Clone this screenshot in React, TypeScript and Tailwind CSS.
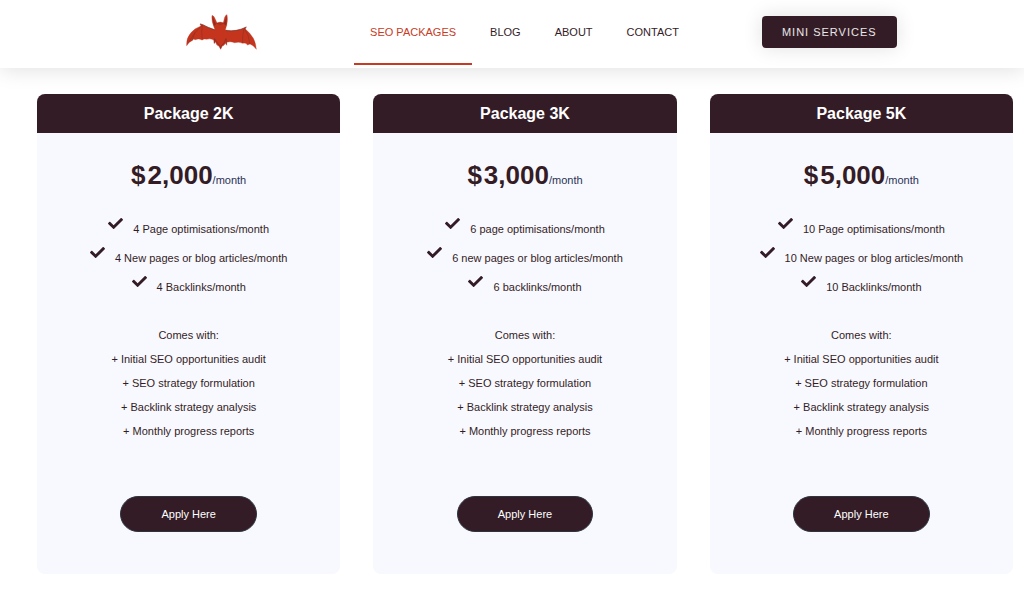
import { FaCheck } from 'react-icons/fa';

interface Package {
  name: string;
  price: string;
  features: string[];
}

const navItems = ['SEO PACKAGES', 'BLOG', 'ABOUT', 'CONTACT'];

const packages: Package[] = [
  {
    name: 'Package 2K',
    price: '2,000',
    features: ['4 Page optimisations/month', '4 New pages or blog articles/month', '4 Backlinks/month'],
  },
  {
    name: 'Package 3K',
    price: '3,000',
    features: ['6 page optimisations/month', '6 new pages or blog articles/month', '6 backlinks/month'],
  },
  {
    name: 'Package 5K',
    price: '5,000',
    features: ['10 Page optimisations/month', '10 New pages or blog articles/month', '10 Backlinks/month'],
  },
];

const extras = [
  '+ Initial SEO opportunities audit',
  '+ SEO strategy formulation',
  '+ Backlink strategy analysis',
  '+ Monthly progress reports',
];

function BatLogo() {
  return (
    <svg viewBox="48 44 213 108" className="h-9 w-[71px]" role="img" aria-label="Bat logo">
      {/* wings and body */}
      <path
        d="M126 48 Q133 50 136 60 L141 71 Q150 66 160 70 L164 54 Q167 46 171 46 Q174 62 170 78 L166 92 Q182 96 198 93 Q212 91 221 87 L229 83 L226 89 Q240 100 250 117 Q258 132 259 150 Q250 137 240 134 L233 137 Q227 129 218 132 Q207 126 194 130 Q180 125 170 129 L170 138 L166 132 Q163 139 156 141 L152 150 L147 141 Q139 138 136 127 L133 133 L131 122 Q119 116 110 120 Q103 117 96 122 Q86 116 76 121 Q70 117 66 124 Q57 127 50 139 Q48 116 64 99 Q76 86 93 80 L90 74 L98 76 Q112 84 135 91 L131 81 Q124 66 126 48 Z"
        fill="#c5351d"
        stroke="#b23a2a"
        strokeWidth="1"
      />
      {/* finger bones */}
      <path
        d="M97 77 L75 100 L66 124 M97 77 Q93 98 97 121 M223 86 Q216 108 218 131 M223 86 L234 108 L240 134 M75 100 L55 130"
        fill="none"
        stroke="#93301f"
        strokeWidth="2"
      />
      <path
        d="M90 74 L98 76 Q115 86 135 92 M168 94 Q200 98 229 83 M134 118 L133 131 M168 118 L170 135"
        fill="none"
        stroke="#75332d"
        strokeWidth="2"
      />
      {/* ears and face */}
      <path d="M127 51 L138 75 L132 80 Z M170 50 L162 74 L169 79 Z" fill="#93271f" />
      <path
        d="M139 71 L147 74 L155 74 L163 70 M134 118 Q140 132 149 138 L152 147 L155 138 Q164 132 168 118"
        fill="none"
        stroke="#7a2c25"
        strokeWidth="2"
      />
    </svg>
  );
}

function Header() {
  return (
    <header className="relative grid h-[68px] grid-cols-[354fr_auto_329fr] bg-white shadow-[0_2px_20px_rgba(0,0,0,0.12)]">
      <a href="#home" className="flex items-center justify-end pr-[97px] pb-1">
        <BatLogo />
      </a>
      <nav className="flex gap-0.5">
        {navItems.map((item, index) => (
          <a
            key={item}
            href={`#${item.toLowerCase().replace(' ', '-')}`}
            className={`h-[65px] border-b-2 px-4 text-[11px] leading-[64px] whitespace-nowrap ${
              index === 0 ? 'border-[#c73b25] text-[#c73b25]' : 'border-transparent'
            }`}
          >
            {item}
          </a>
        ))}
      </nav>
      <div className="flex items-start pt-4 pl-[67px]">
        <button className="h-8 rounded-sm bg-[#341c26] px-5 text-[11px] tracking-[1px] whitespace-nowrap text-white/90 shadow-[0_0_20px_rgba(0,0,0,0.12)]">
          MINI SERVICES
        </button>
      </div>
    </header>
  );
}

function PackageCard({ name, price, features }: Package) {
  return (
    <section className="overflow-hidden rounded-lg bg-[#f8f9fe] pb-[42px] text-center text-[11px]">
      <h2 className="bg-[#341c26] text-base leading-[39px] font-bold text-white">{name}</h2>

      <p className="mt-5 flex items-baseline justify-center leading-[44px]">
        <span className="mr-0.5 text-[26px] font-bold">$</span>
        <span className="text-[26px] font-bold">{price}</span>
        <span className="text-[#293255]">/month</span>
      </p>

      <ul className="mt-3.5">
        {features.map((feature) => (
          <li key={feature} className="flex h-[29px] items-start justify-center gap-2.5">
            <FaCheck className="size-[15px]" />
            <span className="pt-[5px] leading-4">{feature}</span>
          </li>
        ))}
      </ul>

      <div className="mt-5 leading-6">
        <p>Comes with:</p>
        {extras.map((extra) => (
          <p key={extra}>{extra}</p>
        ))}
      </div>

      <button className="mt-[53px] h-9 rounded-full border border-[#2d3540] bg-[#341c26] px-10 text-white">
        Apply Here
      </button>
    </section>
  );
}

export default function App() {
  return (
    <div className="font-['Liberation_Sans',Arial,sans-serif] text-[#341c26]">
      <Header />
      <main className="grid grid-cols-3 gap-[33px] pt-[26px] pr-[11px] pb-3.5 pl-[37px]">
        {packages.map((item) => (
          <PackageCard key={item.name} {...item} />
        ))}
      </main>
    </div>
  );
}
